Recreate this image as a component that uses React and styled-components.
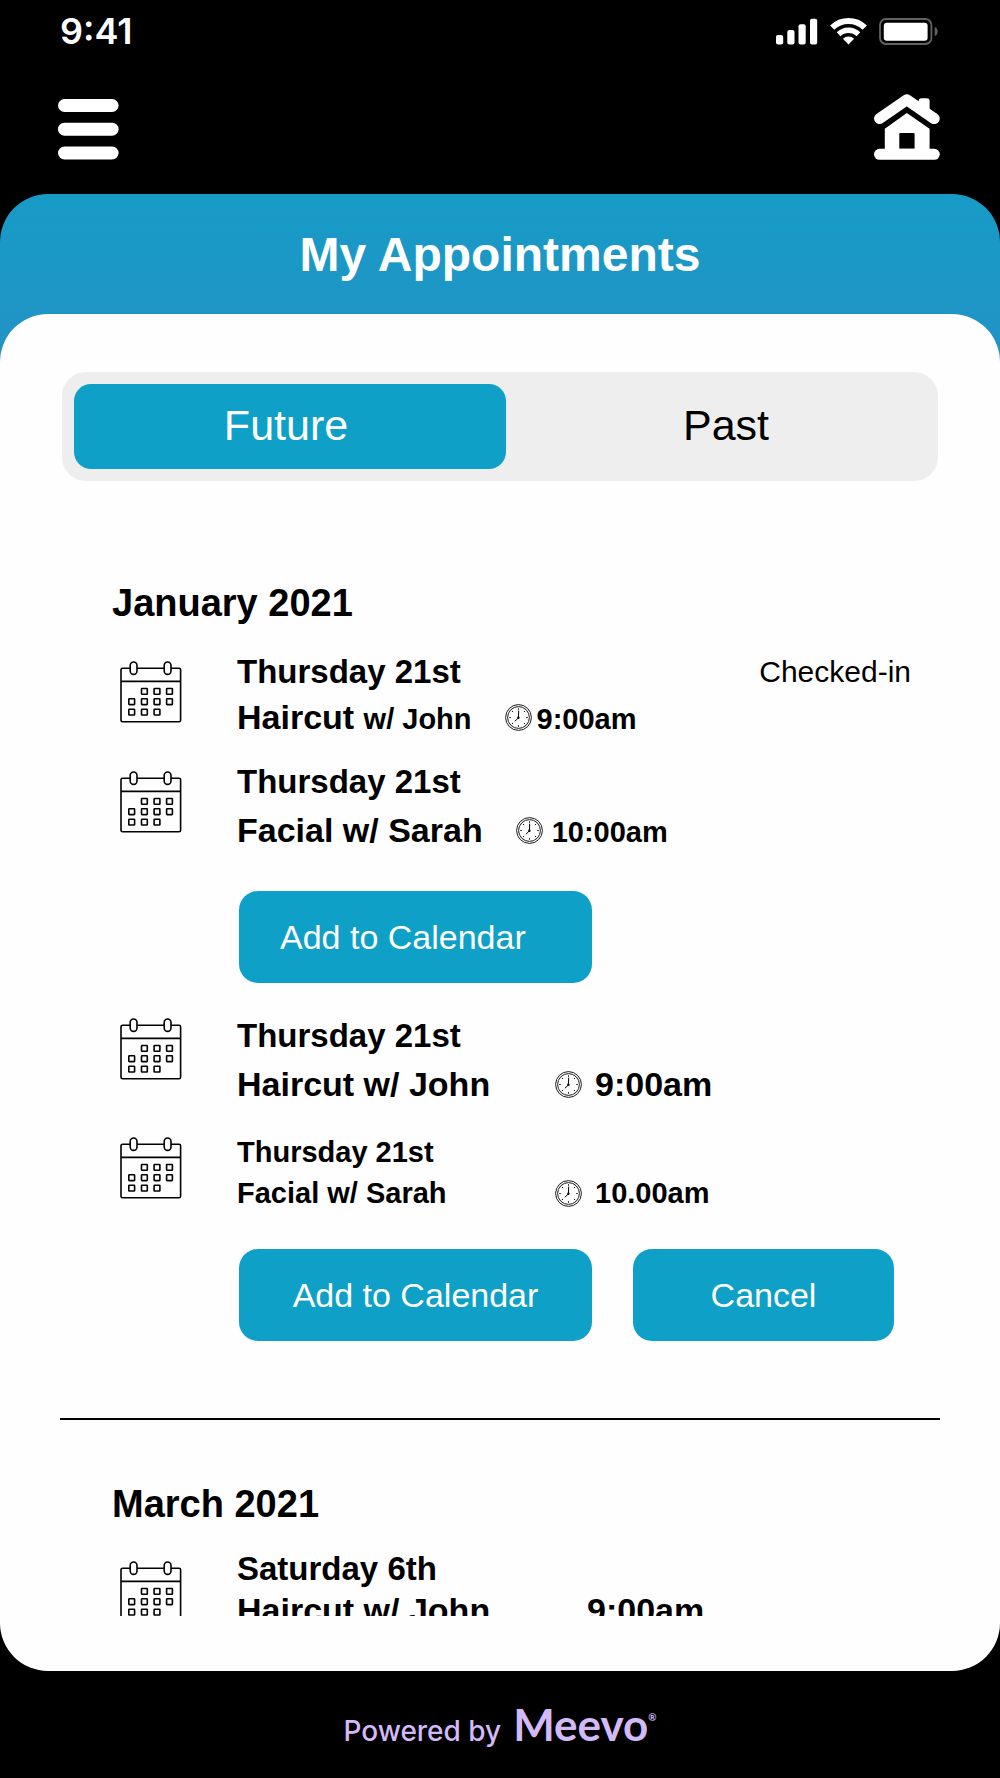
import { useState } from "react";
import styled, { createGlobalStyle } from "styled-components";

const GlobalStyle = createGlobalStyle`
  * {
    box-sizing: border-box;
  }
  body {
    margin: 0;
    background: #000;
    color: #000;
    font-family: "Liberation Sans", Arial, sans-serif;
  }
  button {
    font-family: inherit;
    border: none;
    cursor: pointer;
  }
`

const Screen = styled.div`
  display: flex;
  flex-direction: column;
  height: 100vh;
`

// phone status bar
const StatusBar = styled.div`
  display: flex;
  align-items: center;
  justify-content: space-between;
  padding: 13px 62px 0 60px;
  color: #fff;
`

const Clock = styled.span`
  font-family: Inter, sans-serif;
  font-size: 36px;
  font-weight: 600;
  line-height: 36px;
`

const StatusIcons = styled.div`
  display: flex;
  align-items: center;
  gap: 12px;
`

const NavBar = styled.nav`
  display: flex;
  align-items: flex-end;
  justify-content: space-between;
  padding: 45px 60px 34px 58px;
`

const IconButton = styled.button`
  display: flex;
  padding: 0;
  background: none;
  color: #fff;
`

// the blue only covers the title and the area behind the panel's top corners
const Sheet = styled.main`
  display: flex;
  flex: 1;
  flex-direction: column;
  min-height: 0;
  border-radius: 48px 48px 0 0;
  background: linear-gradient(#179bc6, #2293c5) no-repeat;
  background-size: 100% 168px;
`

const Title = styled.h1`
  margin: 0;
  padding: 33px 0 31px;
  color: #fff;
  font-size: 48px;
  line-height: 56px;
  text-align: center;
`

const Panel = styled.div`
  display: flex;
  flex: 1;
  flex-direction: column;
  min-height: 0;
  padding: 58px 60px 55px;
  border-radius: 48px;
  background: #fefefe;
`

const Tabs = styled.div`
  display: grid;
  grid-template-columns: 1fr 1fr;
  flex: none;
  margin: 0 2px;
  padding: 12px 0 12px 12px;
  border-radius: 24px;
  background: #eee;
`

const Tab = styled.button`
  padding: 0 0 3px;
  border-radius: 17px;
  background: ${props => props.$active ? '#0ea0c6' : 'transparent'};
  color: ${props => props.$active ? '#fff' : '#000'};
  font-size: 43px;
  line-height: 82px;

  &:first-child {
    padding-right: 8px;
  }
  &:last-child {
    padding-left: 8px;
  }
`

const List = styled.div`
  flex: 1;
  min-height: 0;
  margin-top: 99px;
  overflow-y: auto;
  scrollbar-width: none;
`

const Month = styled.section`
  padding: 0 29px 0 52px;
`

const MonthName = styled.h2`
  margin: 0 0 ${props => props.$space}px;
  font-size: 38px;
  line-height: 46px;
`

const Group = styled.div`
  display: flex;
  flex-direction: column;
  gap: ${props => props.$gap}px;

  & + & {
    margin-top: 35px;
  }
`

const Visits = styled.ul`
  display: flex;
  flex-direction: column;
  gap: ${props => props.$gap}px;
  margin: 0;
  padding: 0 0 0 8px;
  list-style: none;
`

const Row = styled.li`
  display: flex;
  align-items: flex-start;
  gap: 55px;

  > svg {
    flex: none;
    margin-top: ${props => props.$iconTop}px;
  }
`

const Info = styled.div`
  display: flex;
  flex-direction: column;
  gap: ${props => props.$gap}px;
  font-size: ${props => props.$compact ? 29 : 34}px;
  font-weight: bold;
  line-height: 36px;
  white-space: nowrap;
`

const Day = styled.div`
  font-size: ${props => props.$compact ? 29 : 33}px;
`

const Detail = styled.div`
  display: flex;
  align-items: baseline;

  svg {
    align-self: center;
    flex: none;
    margin-right: ${props => props.$clockGap}px;
  }
`

const Service = styled.span`
  min-width: ${props => props.$width || 0}px;
  margin-right: ${props => props.$width ? 0 : 33}px;
`

const Small = styled.span`
  font-size: ${props => props.$on ? '29px' : 'inherit'};
  line-height: 1;
`

const Status = styled.span`
  margin-left: auto;
  font-size: 30px;
  line-height: 36px;
`

const Actions = styled.div`
  display: flex;
  gap: 41px;
  padding-left: 127px;
`

const ActionButton = styled.button`
  flex: 0 1 ${props => props.$width}px;
  padding: 0 41px;
  border-radius: 19px;
  background: #0ea0c6;
  color: #fff;
  font-size: 34px;
  line-height: 92px;
  text-align: ${props => props.$left ? 'left' : 'center'};
  white-space: nowrap;
`

const Divider = styled.hr`
  height: 2px;
  margin: 77px 0 61px;
  border: none;
  background: #000;
`

const Footer = styled.footer`
  display: flex;
  align-items: baseline;
  justify-content: center;
  gap: 12px;
  height: 107px;
  padding-top: 25px;
  color: #d3b9f7;
`

const Powered = styled.span`
  font-family: Inter, sans-serif;
  font-size: 28px;
  font-weight: 500;
`

const Brand = styled.span`
  font-family: Lato, sans-serif;
  font-size: 44px;
  font-weight: bold;
  line-height: 56px;

  sup {
    font-size: 10px;
    line-height: 10px;
    vertical-align: 20px;
  }
`

const SignalIcon = () => (
  <svg width="42" height="27" viewBox="0 0 42 27" fill="currentColor">
    <rect x="0" y="17" width="7.2" height="9.5" rx="2" />
    <rect x="11.3" y="12" width="7.2" height="14.5" rx="2" />
    <rect x="22.5" y="6.3" width="7.2" height="20.2" rx="2" />
    <rect x="34" y="0.7" width="7.2" height="25.8" rx="2" />
  </svg>
)

const WifiIcon = () => (
  <svg width="37" height="27" viewBox="0 0 37 27" fill="none" stroke="currentColor">
    <path d="M2.2 9.6A23.5 23.5 0 0 1 34.8 9.6" strokeWidth="6" />
    <path d="M8.6 16.3A14.2 14.2 0 0 1 28.4 16.3" strokeWidth="5.4" />
    <path d="M18.5 26.5L12.9 20.7A8.2 8.2 0 0 1 24.1 20.7Z" fill="currentColor" stroke="none" />
  </svg>
)

const BatteryIcon = () => (
  <svg width="59" height="27" viewBox="0 0 59 27">
    <rect x="1" y="1" width="51.4" height="25" rx="6" fill="none" stroke="#626262" strokeWidth="1.8" />
    <rect x="4.8" y="4.7" width="43.8" height="18" rx="3" fill="#fff" />
    <path d="M55.7 9C59.7 10.5 59.7 16.5 55.7 18Z" fill="#626262" />
  </svg>
)

const MenuIcon = () => (
  <svg width="61" height="61" viewBox="0 0 61 61" fill="currentColor">
    <rect x="0" y="0" width="60.6" height="13" rx="6.5" />
    <rect x="0" y="23.7" width="60.6" height="13" rx="6.5" />
    <rect x="0" y="47.5" width="60.6" height="13" rx="6.5" />
  </svg>
)

const HomeIcon = () => (
  <svg width="66" height="66" viewBox="0 0 66 66" fill="currentColor">
    <path d="M5.6 24.6L32.8 5.8L60.2 24.6" fill="none" stroke="currentColor" strokeWidth="11" strokeLinecap="round" strokeLinejoin="round" />
    <path d="M44.6 12V7.3a3 3 0 0 1 3-3h5a3 3 0 0 1 3 3V20Z" />
    <path fillRule="evenodd" d="M32.8 19L55.6 34.8V56H10.8V34.8ZM26.3 39a1 1 0 0 0-1 1V54.8H40.6V40A1 1 0 0 0 39.6 39Z" />
    <rect x="0" y="54.8" width="65.8" height="11" rx="5.5" />
  </svg>
)

const DAYS = [
  [20.7, 26.7], [33.3, 26.7], [45.8, 26.7],
  [8, 37], [20.7, 37], [33.3, 37], [45.8, 37],
  [8, 47.4], [20.7, 47.4], [33.3, 47.4],
]

const CalendarIcon = () => (
  <svg width="62" height="62" viewBox="0 0 62 62" fill="#fefefe" stroke="#000" strokeWidth="1.6">
    <rect x="1" y="7.2" width="59.6" height="53.6" rx="1.6" />
    <path d="M1 20.4H60.6" />
    <rect x="10.2" y="1" width="6.8" height="12.4" rx="3.4" />
    <rect x="44.2" y="1" width="6.8" height="12.4" rx="3.4" />
    {DAYS.map(([x, y]) => (
      <rect key={`${x}-${y}`} x={x + 0.8} y={y + 0.8} width="5.8" height="5.8" rx="0.6" />
    ))}
  </svg>
)

const ClockIcon = () => (
  <svg width="27" height="27" viewBox="0 0 27 27" fill="none" stroke="#000">
    <circle cx="13.5" cy="13.5" r="12.9" strokeWidth="0.9" />
    <circle cx="13.5" cy="13.5" r="10.9" strokeWidth="0.9" />
    {[0, 45, 90, 135, 180, 225, 270, 315].map(a => (
      <path key={a} d="M13.5 4.2V5.8" strokeWidth="0.9" transform={`rotate(${a} 13.5 13.5)`} />
    ))}
    <path d="M13.7 6.6L13.4 13.9L9.8 17.3" strokeWidth="1" />
    <circle cx="13.4" cy="13.7" r="1.2" fill="#000" stroke="none" />
  </svg>
)

const Visit = ({ day, service, staff, time, status, gap, iconTop, compact, smallStaff, smallTime, width, clockGap, clock = true }) => (
  <Row $iconTop={iconTop}>
    <CalendarIcon />
    <Info $gap={gap} $compact={compact}>
      <Day $compact={compact}>{day}</Day>
      <Detail $clockGap={clockGap}>
        <Service $width={width}>{service} <Small $on={smallStaff}>w/ {staff}</Small></Service>
        {clock && <ClockIcon />}
        <Small $on={smallTime}>{time}</Small>
      </Detail>
    </Info>
    {status && <Status>{status}</Status>}
  </Row>
)

function App() {
  const [tab, setTab] = useState("Future");

  return (
    <Screen>
      <GlobalStyle />
      <StatusBar>
        <Clock>9:41</Clock>
        <StatusIcons>
          <SignalIcon />
          <WifiIcon />
          <BatteryIcon />
        </StatusIcons>
      </StatusBar>
      <NavBar>
        <IconButton aria-label="Menu"><MenuIcon /></IconButton>
        <IconButton aria-label="Home"><HomeIcon /></IconButton>
      </NavBar>

      <Sheet>
        <Title>My Appointments</Title>
        <Panel>
          <Tabs role="tablist">
            {["Future", "Past"].map(name => (
              <Tab key={name} role="tab" aria-selected={tab === name} $active={tab === name} onClick={() => setTab(name)}>
                {name}
              </Tab>
            ))}
          </Tabs>

          <List>
            <Month>
              <MonthName $space={28}>January 2021</MonthName>
              <Group $gap={43}>
                <Visits $gap={29}>
                  <Visit day="Thursday 21st" service="Haircut" staff="John" time="9:00am" status="Checked-in" gap={9} iconTop={7} clockGap={5} smallStaff smallTime />
                  <Visit day="Thursday 21st" service="Facial" staff="Sarah" time="10:00am" gap={12} iconTop={7} clockGap={9} smallTime />
                </Visits>
                <Actions>
                  <ActionButton $width={353} $left>Add to Calendar</ActionButton>
                </Actions>
              </Group>
              <Group $gap={38}>
                <Visits $gap={32}>
                  <Visit day="Thursday 21st" service="Haircut" staff="John" time="9:00am" gap={12} iconTop={0} width={318} clockGap={13} />
                  <Visit day="Thursday 21st" service="Facial" staff="Sarah" time="10.00am" gap={5} iconTop={3} width={318} clockGap={13} compact />
                </Visits>
                <Actions>
                  <ActionButton $width={353}>Add to Calendar</ActionButton>
                  <ActionButton $width={261}>Cancel</ActionButton>
                </Actions>
              </Group>
            </Month>
            <Divider />
            <Month>
              <MonthName $space={24}>March 2021</MonthName>
              <Visits>
                <Visit day="Saturday 6th" service="Haircut" staff="John" time="9:00am" gap={5} iconTop={10} width={350} clock={false} />
              </Visits>
            </Month>
          </List>
        </Panel>
      </Sheet>

      <Footer>
        <Powered>Powered by</Powered>
        <Brand>Meevo<sup>®</sup></Brand>
      </Footer>
    </Screen>
  );
}

export default App;
